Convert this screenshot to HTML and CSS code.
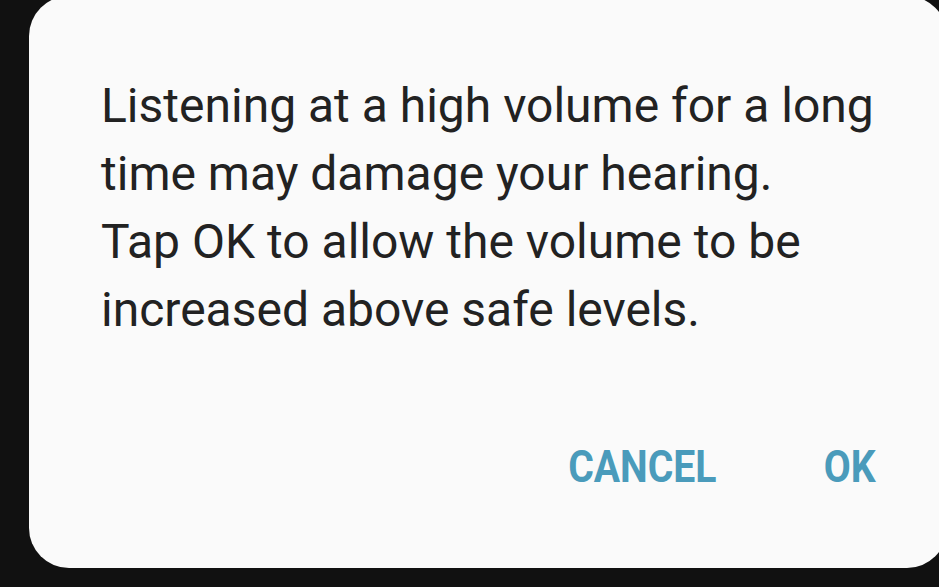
FILE: index.html
```html
<!DOCTYPE html>
<html>
<head>
<meta charset="utf-8">
<link rel="stylesheet" href="styles.css">
</head>
<body>
<div class="dialog">
  <p class="message">Listening at a high volume for a long time may damage your hearing.<br>Tap OK to allow the volume to be increased above safe levels.</p>
  <div class="actions">
    <span class="btn">CANCEL</span>
    <span class="btn">OK</span>
  </div>
</div>
</body>
</html>
```
FILE: styles.css
```css
html, body {
  margin: 0;
  padding: 0;
  background: #111111;
  width: 939px;
  height: 587px;
  overflow: hidden;
}
body {
  padding: 0 0 0 29px;
  box-sizing: border-box;
}
.dialog {
  margin-top: -4px;
  width: 918px;
  height: 572px;
  background: #fafafa;
  border-radius: 40px;
  box-sizing: border-box;
  padding: 76px 0 0 72px;
  display: flex;
  flex-direction: column;
  font-family: Roboto, "Noto Sans", sans-serif;
}
.message {
  margin: 0;
  width: 800px;
  font-size: 48px;
  line-height: 68px;
  color: #222222;
}
.actions {
  display: flex;
  justify-content: flex-end;
  gap: 100px;
  margin-top: 97px;
  padding-right: 71px;
}
.btn {
  font-size: 45px;
  line-height: 52px;
  font-weight: 700;
  color: #4a9bbb;
  display: inline-block;
  transform: scaleX(0.87);
  transform-origin: right center;
}
```
